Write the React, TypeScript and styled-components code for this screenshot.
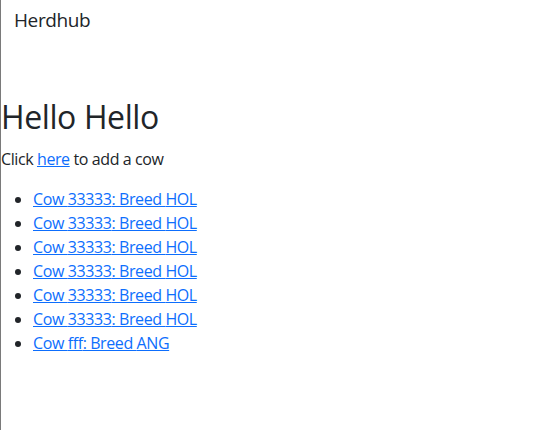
import styled, { createGlobalStyle } from "styled-components";

const GlobalStyle = createGlobalStyle`
  body {
    margin: 0;
    font-family: "Open Sans", "Noto Sans", sans-serif;
    font-size: 16px;
    line-height: 1.5;
    letter-spacing: -0.4px;
    color: #212529;
    background: #fff;
  }
`;

const Shell = styled.div`
  min-height: 100vh;
  border-left: 1px solid #7a7a7a;
  box-sizing: border-box;
`;

const NavBar = styled.header`
  display: flex;
  align-items: center;
  height: 40px;
  padding: 0 13px;
  margin-bottom: 59px;
`;

const Brand = styled.span`
  font-size: 19px;
  line-height: 30px;
  color: #212529;
`;

const Title = styled.h1`
  margin: 0 0 13px;
  font-size: 32px;
  font-weight: 400;
  line-height: 1.1;
`;

const Intro = styled.p`
  margin: 0 0 16px;
`;

const Link = styled.a`
  color: #0d6efd;
  text-decoration: underline;
`;

const CowList = styled.ul`
  margin: 0;
  padding-left: 32px;
`;

const cows = [
  { tag: "33333", breed: "HOL" },
  { tag: "33333", breed: "HOL" },
  { tag: "33333", breed: "HOL" },
  { tag: "33333", breed: "HOL" },
  { tag: "33333", breed: "HOL" },
  { tag: "33333", breed: "HOL" },
  { tag: "fff", breed: "ANG" },
];

export default function App() {
  return (
    <>
      <GlobalStyle />
      <Shell>
        <NavBar>
          <Brand>Herdhub</Brand>
        </NavBar>
        <main>
          <Title>Hello Hello</Title>
          <Intro>
            Click <Link href="#">here</Link> to add a cow
          </Intro>
          <CowList>
            {cows.map((cow, index) => (
              <li key={index}>
                <Link href="#">
                  Cow {cow.tag}: Breed {cow.breed}
                </Link>
              </li>
            ))}
          </CowList>
        </main>
      </Shell>
    </>
  );
}
